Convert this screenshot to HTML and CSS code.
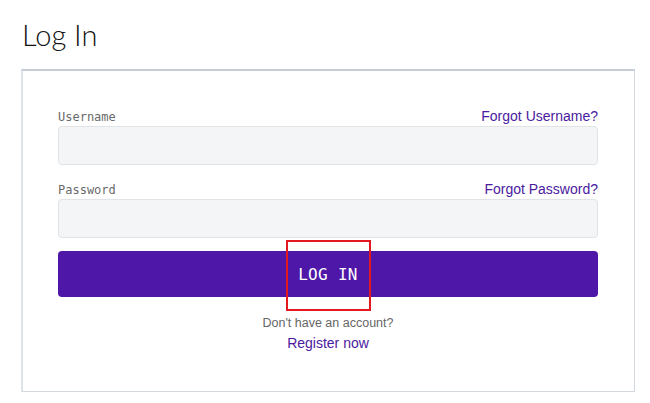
FILE: index.html
```html
<!DOCTYPE html>
<html lang="en">
<head>
<meta charset="utf-8">
<title>Log In</title>
<link rel="stylesheet" href="styles.css">
</head>
<body>
<div class="page">
  <h1 class="title">Log In</h1>
  <div class="card">
    <form class="form">
      <div class="field">
        <div class="field-head">
          <label class="label">Username</label>
          <a class="link" href="#">Forgot Username?</a>
        </div>
        <input class="input" type="text">
      </div>
      <div class="field">
        <div class="field-head">
          <label class="label">Password</label>
          <a class="link" href="#">Forgot Password?</a>
        </div>
        <input class="input" type="password">
      </div>
      <div class="submit-wrap">
        <button class="submit" type="button">LOG IN</button>
        <div class="highlight"></div>
      </div>
      <div class="register">
        <div class="register-q">Don't have an account?</div>
        <a class="link register-link" href="#">Register now</a>
      </div>
    </form>
  </div>
</div>
</body>
</html>
```
FILE: styles.css
```css
* { box-sizing: border-box; }
html, body { margin: 0; padding: 0; background: #fff; }
body { font-family: "Liberation Sans", Arial, sans-serif; }
.page { padding: 0 15px 0 21px; }
.title {
  margin: 0;
  padding: 17px 0 0 1px;
  height: 69px;
  font-family: Lato, "Open Sans", sans-serif;
  font-weight: 300;
  font-size: 29px;
  line-height: 36px;
  color: #111;
}
.card {
  border: 1px solid #d3d9de;
  border-top: 2px solid #c4ccd5;
  border-left: 2px solid #dde2e6;
  padding: 37px 36px 37px 35px;
}
.form { display: flex; flex-direction: column; }
.field { display: flex; flex-direction: column; gap: 2px; margin-bottom: 16px; }
.field + .field { margin-bottom: 13px; }
.field-head {
  display: flex;
  justify-content: space-between;
  align-items: center;
  height: 16px;
}
.label {
  font-family: "DejaVu Sans Mono", monospace;
  font-size: 12px;
  color: #6a6a6a;
  padding-top: 2px;
}
.link {
  font-family: "Liberation Sans", Arial, sans-serif;
  font-size: 14px;
  color: #4a1aa0;
  text-decoration: none;
}
.input {
  height: 39px;
  width: 100%;
  background: #f4f5f7;
  border: 1px solid #e1e3e6;
  border-radius: 4px;
  margin: 0;
}
.submit-wrap { position: relative; }
.submit {
  display: block;
  width: 100%;
  height: 46px;
  border: none;
  border-radius: 4px;
  background: #4f17a8;
  color: #fff;
  font-family: "DejaVu Sans Mono", monospace;
  font-size: 16px;
  letter-spacing: 0.3px;
}
.highlight {
  position: absolute;
  left: 228px;
  top: -11px;
  width: 85px;
  height: 71px;
  border: 2px solid #e3191e;
}
.register {
  display: flex;
  flex-direction: column;
  align-items: center;
  margin-top: 17px;
}
.register-q {
  font-size: 12.5px;
  line-height: 18px;
  color: #666;
}
.register-link { line-height: 22px; }
```
